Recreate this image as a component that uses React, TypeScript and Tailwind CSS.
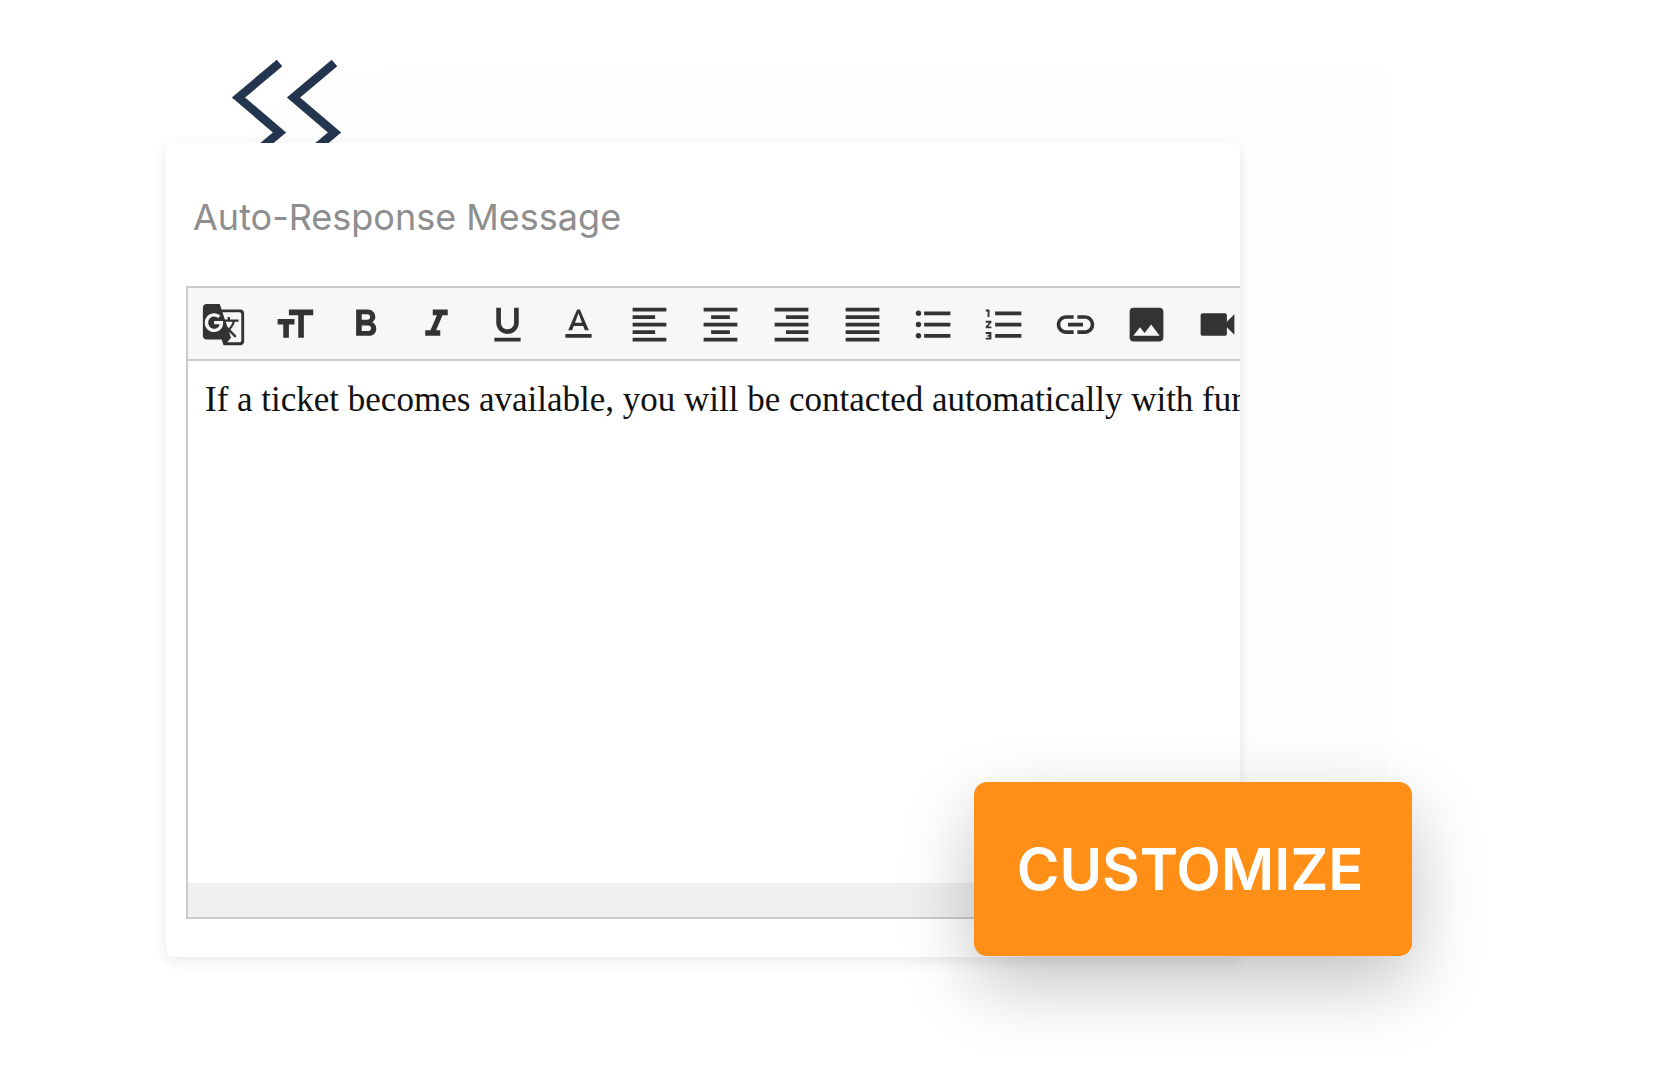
import {
  MdFormatAlignCenter,
  MdFormatAlignJustify,
  MdFormatAlignLeft,
  MdFormatAlignRight,
  MdFormatBold,
  MdFormatItalic,
  MdFormatListBulleted,
  MdFormatListNumbered,
  MdFormatSize,
  MdFormatUnderlined,
  MdGTranslate,
  MdImage,
  MdInsertLink,
  MdTextFormat,
  MdVideocam,
} from 'react-icons/md';

const tools = [
  { label: 'Translate', Icon: MdGTranslate },
  { label: 'Font size', Icon: MdFormatSize },
  { label: 'Bold', Icon: MdFormatBold },
  { label: 'Italic', Icon: MdFormatItalic },
  { label: 'Underline', Icon: MdFormatUnderlined },
  { label: 'Text color', Icon: MdTextFormat },
  { label: 'Align left', Icon: MdFormatAlignLeft },
  { label: 'Align center', Icon: MdFormatAlignCenter },
  { label: 'Align right', Icon: MdFormatAlignRight },
  { label: 'Justify', Icon: MdFormatAlignJustify },
  { label: 'Bulleted list', Icon: MdFormatListBulleted },
  { label: 'Numbered list', Icon: MdFormatListNumbered },
  { label: 'Insert link', Icon: MdInsertLink },
  { label: 'Insert image', Icon: MdImage },
  { label: 'Insert video', Icon: MdVideocam },
];

function Zigzag() {
  return (
    <svg
      aria-hidden="true"
      className="absolute -top-[84px] left-[64px] h-[120px] w-[114px]"
      viewBox="0 0 114 120"
      fill="none"
      stroke="#24364f"
      strokeWidth="8.6"
    >
      <path d="M49.5 4 L8.5 38.5 L49.5 73.5 L8.5 108" />
      <path d="M104.5 4 L63.5 38.5 L104.5 73.5 L63.5 108" />
    </svg>
  );
}

function Toolbar() {
  return (
    <div
      role="toolbar"
      aria-label="Formatting"
      className="flex h-[73px] overflow-hidden border-b-2 border-[#cbcbcb] bg-[#f7f7f7] pt-[2px]"
    >
      {tools.map(({ label, Icon }) => (
        <button
          key={label}
          type="button"
          aria-label={label}
          className="flex w-[71px] shrink-0 items-center justify-center text-[#333333]"
        >
          <Icon className="size-[45px]" />
        </button>
      ))}
    </div>
  );
}

export default function App() {
  return (
    <main className="min-h-screen overflow-hidden bg-white pt-[143px] pr-[416px] pb-[123px] pl-[166px]">
      <div className="relative">
        <div className="absolute -top-[72px] -right-[146px] bottom-[100px] left-[44px] rounded-tl-[180px] bg-[#fdfdfd]" />
        <Zigzag />
        <section className="relative overflow-hidden rounded-md bg-white pt-[50px] pb-[38px] pl-5 shadow-[0_4px_14px_rgba(20,20,50,0.09)]">
          <label
            htmlFor="auto-response"
            className="block pl-[7px] font-['Inter',sans-serif] text-[36px] leading-[48px] text-[#8e8e8e]"
          >
            Auto-Response Message
          </label>
          <div className="mt-[45px] border-2 border-r-0 border-[#cbcbcb]">
            <Toolbar />
            <textarea
              id="auto-response"
              wrap="off"
              className="block h-[522px] w-full resize-none overflow-hidden bg-white pt-[19px] pl-[17px] font-['Liberation_Serif',serif] text-[35px] leading-[40px] text-[#111111] outline-none"
              defaultValue="If a ticket becomes available, you will be contacted automatically with further details."
            />
            <div className="h-[34px] bg-[#f0f0f0]" />
          </div>
        </section>
        <button
          type="button"
          className="absolute -right-[172px] bottom-px h-[174px] w-[438px] rounded-[13px] bg-[#ff8f17] pr-[6px] font-['Inter',sans-serif] text-[58px] font-semibold text-white shadow-[0_28px_72px_rgba(0,0,0,0.24)]"
        >
          CUSTOMIZE
        </button>
      </div>
    </main>
  );
}
